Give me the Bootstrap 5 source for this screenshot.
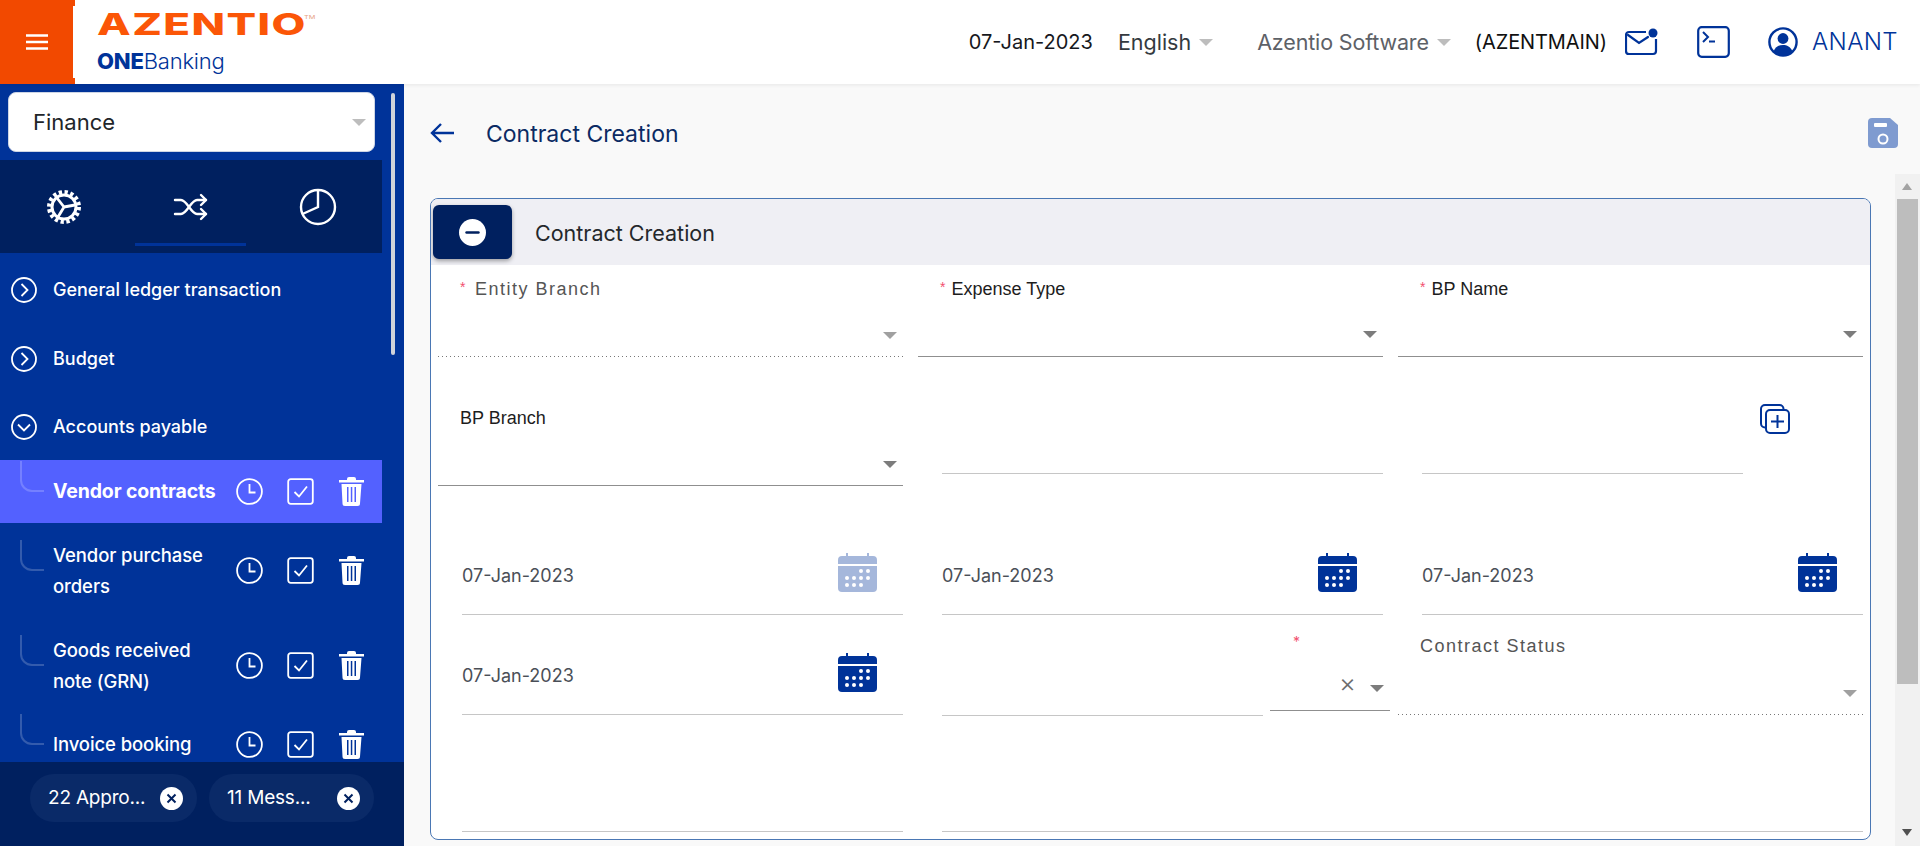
<!DOCTYPE html>
<html lang="en">
<head>
    <meta charset="UTF-8">
    <title>Contract Creation</title>
    <link href="https://cdn.jsdelivr.net/npm/bootstrap@5.3.1/dist/css/bootstrap.min.css" rel="stylesheet">
    <style>
        html, body { height: 100%; overflow: hidden; }
        body { font-family: Inter, "Liberation Sans", sans-serif; background: #f9f9f9; }

        /* top bar */
        .top-bar { height: 84px; background: #fff; padding: 0; box-shadow: 0 1px 4px rgba(0,0,0,.08); position: relative; z-index: 2; flex-wrap: nowrap; }
        .menu-btn { width: 75px; height: 84px; background: #f24900; position: relative; }
        .menu-btn::after { content: ""; position: absolute; left: 73px; top: 6px; width: 2px; height: 72px; background: #fff; }
        .menu-btn svg { margin-right: 2px; }
        .brand-box { margin-left: 22px; width: 260px; }
        .brand-main { color: #fb5607; font-size: 30px; font-weight: 800; line-height: 30px; letter-spacing: 1px; margin-top: 9px; white-space: nowrap; display: inline-block; transform: scaleX(1.46); transform-origin: left center; }
        .brand-main sup { font-size: 5px; font-weight: 400; top: -16px; letter-spacing: 0; color: #e7a283; position: relative; vertical-align: baseline; margin-left: -2px; }
        .brand-sub { color: #003399; font-size: 22px; line-height: 28px; margin-top: 6px; font-weight: 300; letter-spacing: -.2px; }
        .brand-sub b { font-weight: 800; }
        .top-date { font-size: 20px; color: #16181d; margin-right: 25px; white-space: nowrap; }
        .top-lang { font-size: 21.5px; color: #343a40; white-space: nowrap; }
        .top-org { font-size: 21.5px; color: #5d6167; white-space: nowrap; letter-spacing: -.15px; }
        .top-code { font-size: 20px; color: #111; white-space: nowrap; margin-right: 18px; letter-spacing: -.1px; }
        .top-user { color: #003399; font-size: 24px; font-weight: 300; letter-spacing: .4px; margin: 0 22px 0 14px; }
        .tri { width: 0; height: 0; border-left: 7px solid transparent; border-right: 7px solid transparent; border-top: 7px solid #bdbdbd; flex: none; }
        .tri-dark { border-top-color: #7c7c7c; }
        .tri-mid { border-top-color: #a0a0a0; }

        /* sidebar */
        .app-main { height: 762px; }
        .side-bar { width: 404px; background: #003399; position: relative; flex: none; overflow: hidden; color: #fff; }
        .side-thumb { position: absolute; left: 391px; top: 9px; width: 4px; height: 262px; background: #cfd3da; border-radius: 2px; }
        .mod-select { margin: 8px 0 0 8px; width: 367px; height: 60px; background: #fff; border: 1px solid #cdd5e5; border-radius: 8px; color: #212529; font-size: 22px; padding-left: 24px; padding-right: 8px; }
        .mod-tabs { width: 382px; height: 93px; background: #00205f; margin: 8px 0 2px; position: relative; }
        .mod-tab { width: 127px; position: relative; height: 100%; }
        .mod-tab.is-on::after { content: ""; position: absolute; left: 8px; right: 8px; bottom: 7px; height: 3px; background: #003399; }
        .tree-head { height: 69px; font-size: 18px; font-weight: 500; padding-left: 11px; }
        .tree-head svg { margin-right: 16px; flex: none; }
        .tree-row { width: 382px; min-height: 63px; font-size: 18.5px; font-weight: 500; line-height: 31px; letter-spacing: -.1px; padding: 0 18px 0 53px; position: relative; }
        .tree-row::before { content: ""; position: absolute; left: 20px; bottom: 50%; width: 24px; height: 31px; border-left: 2px solid rgba(255,255,255,.2); border-bottom: 2px solid rgba(255,255,255,.2); border-bottom-left-radius: 12px; }
        .tree-row.is-on { background: #5361ff; font-weight: 700; font-size: 19.5px; letter-spacing: -.15px; }
        .tree-tall { min-height: 95px; }
        .tree-name { width: 166px; flex: none; white-space: normal; }
        .is-on .tree-name { white-space: nowrap; }
        .tree-ico { margin-left: auto; gap: 24px; }
        .tree-ico svg:last-child { margin-left: 1px; }
        .side-foot { position: absolute; left: 0; right: 0; bottom: 0; height: 84px; background: #00205f; padding: 12px 30px 0; gap: 12px; }
        .foot-pill { height: 48px; border-radius: 24px; background: #0a2a68; font-size: 19px; letter-spacing: -.2px; padding-left: 18px; white-space: nowrap; }
        .foot-x { width: 23px; height: 23px; border-radius: 50%; background: #fff; margin-left: auto; }

        /* content */
        .page-area { min-width: 0; }
        .page-head { height: 90px; padding: 8px 22px 0 26px; flex: none; }
        .page-title { color: #0b2a63; font-size: 23px; margin-left: 31px; padding-top: 2px; }
        .page-scroll { min-height: 0; }
        .page-pane { padding: 24px 24px 0 26px; min-width: 0; }
        .bar-track { width: 25px; background: #f1f1f1; flex: none; position: relative; }
        .bar-thumb { position: absolute; left: 2px; right: 2px; top: 25px; height: 485px; background: #bdbdbd; }
        .bar-up, .bar-down { position: absolute; left: 7px; width: 0; height: 0; border-left: 5px solid transparent; border-right: 5px solid transparent; }
        .bar-up { top: 9px; border-bottom: 7px solid #a3a3a3; }
        .bar-down { bottom: 10px; border-top: 7px solid #505050; }

        .form-card { height: 642px; border: 1px solid #4a77b4; border-radius: 8px; background: #fff; overflow: hidden; }
        .form-card .card-header { height: 66px; padding: 6px 2px; background: #efeff4; border: 0; border-radius: 0; }
        .fold-btn { width: 79px; height: 54px; background: #00205f; border-radius: 6px; border: 0; box-shadow: 0 2px 4px rgba(0,0,0,.35); padding: 0; }
        .fold-title { font-size: 21.5px; color: #24272b; margin-left: 23px; padding-top: 2px; }
        .form-grid { display: grid; grid-template-columns: repeat(3, 465px); grid-template-rows: 92px 129px 129px 100px 117px; column-gap: 15px; padding: 0 0 0 7px; }
        .fld { height: 100%; border-bottom: 1px solid #8f8f8f; position: relative; }
        .fld-dots { border-bottom: 0; background: linear-gradient(to right, #777 0 1.5px, transparent 1.5px 4px) left bottom / 4px 1px repeat-x; }
        .fld-label { font-family: "Liberation Sans", Arial, sans-serif; font-size: 18px; line-height: 19px; color: #1d1d1d; white-space: nowrap; padding-left: 22px; }
        .fld-label i { color: #f2506e; font-style: normal; font-size: 14px; position: relative; top: -3px; margin-right: 6px; }
        .label-soft { color: #555; letter-spacing: 1.5px; }
        .label-soft i { margin-right: 8px; }
        .pad-a { padding-top: 15px; }
        .pad-b { padding-top: 52px; }
        .pad-c { padding-top: 22px; }
        .fld .tri { position: absolute; right: 6px; bottom: 18px; }
        .fld .low { bottom: 17px; }
        .date-fld { margin-left: 24px; height: 100%; border-bottom: 1px solid #c6c6c6; padding: 0 26px 22px 0; font-size: 18px; line-height: 24px; color: #4a4f57; }
        .date-fld span { margin-bottom: 4px; }
        .cal-off { opacity: .35; }
        .blank-line { margin: 0 0 12px 24px; border-bottom: 1px solid #c6c6c6; height: calc(100% - 12px); flex: 1 1 auto; }
        .short-line { flex: 0 0 321px; }
        .add-btn { margin: 47px 0 0 17px; }
        .wee-line { flex: 0 0 321px; margin: 0 0 -1px 24px; border-bottom: 1px solid #c6c6c6; }
        .wee-select { flex: 0 0 120px; margin: 0 -7px 4px 7px; border-bottom: 1px solid #8f8f8f; position: relative; }
        .wee-star { position: absolute; left: 23px; top: 20px; color: #f2506e; font-size: 14px; line-height: 14px; }
        .wee-x { position: absolute; left: 69px; bottom: 14px; color: #6d6d6d; font-size: 26px; line-height: 26px; font-weight: 300; }
        .wee-select .tri { position: absolute; left: 100px; bottom: 18px; }
        .end-line { margin-left: 24px; height: 100%; border-bottom: 1px solid #c6c6c6; }
    </style>
</head>
<body class="d-flex flex-column">
    <!-- top bar -->
    <nav class="navbar top-bar d-flex align-items-center">
        <div class="menu-btn d-flex align-items-center justify-content-center">
            <svg width="22" height="16" viewBox="0 0 22 16"><path d="M0 1.5h22M0 8h22M0 14.5h22" stroke="#fff" stroke-width="2.4"/></svg>
        </div>
        <div class="brand-box align-self-start">
            <div class="brand-main">AZENTIO<sup>TM</sup></div>
            <div class="brand-sub"><b>ONE</b>Banking</div>
        </div>
        <div class="d-flex align-items-center ms-auto">
            <span class="top-date">07-Jan-2023</span>
            <span class="top-lang">English</span>
            <span class="tri ms-2" style="margin-right:44px"></span>
            <span class="top-org">Azentio Software</span>
            <span class="tri ms-2" style="margin-right:24px"></span>
            <span class="top-code">(AZENTMAIN)</span>
            <svg width="33" height="28" viewBox="0 0 33 28" fill="none" stroke="#003399" stroke-width="2.2" style="margin-right:39px"><path d="M21 4H4a3 3 0 0 0-3 3v16a3 3 0 0 0 3 3h24a3 3 0 0 0 3-3V11"/><path d="M3 7l11 8 9-6" stroke-linecap="round"/><circle cx="28" cy="5" r="4.5" fill="#003399" stroke="none"/></svg>
            <svg width="33" height="32" viewBox="0 0 33 32" fill="none" stroke="#003399" stroke-width="2.2" style="margin-right:38px"><rect x="1.2" y="1.2" width="30.6" height="29.6" rx="3.5"/><path d="M6 6l5 5-5 5M12 15.5h6" stroke-width="2"/></svg>
            <svg width="30" height="30" viewBox="0 0 30 30" fill="none"><circle cx="15" cy="15" r="13.6" stroke="#003399" stroke-width="2.4"/><circle cx="15" cy="11.5" r="5.4" fill="#003399"/><path d="M5.5 24.5c2-5 5.5-6.5 9.5-6.5s7.5 1.5 9.5 6.5a13.5 13.5 0 0 1-19 0z" fill="#003399"/></svg>
            <span class="top-user">ANANT</span>
        </div>
    </nav>

    <div class="app-main d-flex">
        <!-- sidebar -->
        <aside class="side-bar">
            <div class="side-thumb"></div>
            <div class="mod-select d-flex align-items-center justify-content-between">
                <span>Finance</span>
                <span class="tri"></span>
            </div>
            <div class="mod-tabs d-flex">
                <div class="mod-tab d-flex align-items-center justify-content-center">
                    <svg width="36" height="36" viewBox="0 0 36 36" fill="none" stroke="#fff">
                        <circle cx="18" cy="18" r="15" stroke-width="4" stroke-dasharray="3.3 2.6"/>
                        <circle cx="18" cy="18" r="12" stroke-width="3"/>
                        <path d="M18 18L11 9M18 18L29 16M18 18L12 28" stroke-width="2.8"/>
                    </svg>
                </div>
                <div class="mod-tab is-on d-flex align-items-center justify-content-center">
                    <svg width="36" height="28" viewBox="0 0 36 28" fill="none" stroke="#fff" stroke-width="2.4" stroke-linecap="round" stroke-linejoin="round">
                        <path d="M2 7h6c6 0 10 14 16 14h9M2 21h6c6 0 10-14 16-14h9"/>
                        <path d="M28 2l5 5-5 5M28 16l5 5-5 5"/>
                    </svg>
                </div>
                <div class="mod-tab d-flex align-items-center justify-content-center">
                    <svg width="38" height="38" viewBox="0 0 38 38" fill="none" stroke="#fff" stroke-width="2.4">
                        <circle cx="19" cy="19" r="17"/>
                        <path d="M19 2v17L3.500 26"/>
                    </svg>
                </div>
            </div>
            <div class="tree-head d-flex align-items-center">
                <svg width="26" height="26" viewBox="0 0 26 26" fill="none" stroke="#fff" stroke-width="1.8"><circle cx="13" cy="13" r="12"/><path d="M10.5 7l6 6-6 6"/></svg>
                General ledger transaction
            </div>
            <div class="tree-head d-flex align-items-center">
                <svg width="26" height="26" viewBox="0 0 26 26" fill="none" stroke="#fff" stroke-width="1.8"><circle cx="13" cy="13" r="12"/><path d="M10.5 7l6 6-6 6"/></svg>
                Budget
            </div>
            <div class="tree-head d-flex align-items-center" style="height:67px">
                <svg width="26" height="26" viewBox="0 0 26 26" fill="none" stroke="#fff" stroke-width="1.8"><circle cx="13" cy="13" r="12"/><path d="M7 10.5l6 6 6-6"/></svg>
                Accounts payable
            </div>
            <div id="tree-rows"></div>
            <div class="side-foot d-flex">
                <div class="foot-pill d-flex align-items-center" style="width:167px;padding-right:14px">
                    22 Appro...
                    <span class="foot-x d-flex align-items-center justify-content-center"><svg width="11" height="11" viewBox="0 0 11 11"><path d="M1.5 1.5l8 8M9.5 1.5l-8 8" stroke="#00205f" stroke-width="2"/></svg></span>
                </div>
                <div class="foot-pill d-flex align-items-center" style="width:165px;padding-right:14px">
                    11 Mess...
                    <span class="foot-x d-flex align-items-center justify-content-center"><svg width="11" height="11" viewBox="0 0 11 11"><path d="M1.5 1.5l8 8M9.5 1.5l-8 8" stroke="#00205f" stroke-width="2"/></svg></span>
                </div>
            </div>
        </aside>

        <!-- page -->
        <main class="page-area flex-grow-1 d-flex flex-column">
            <div class="page-head d-flex align-items-center">
                <svg width="25" height="22" viewBox="0 0 25 22" fill="none" stroke="#003399" stroke-width="2.4"><path d="M24 11H2M11 2l-9 9 9 9"/></svg>
                <span class="page-title">Contract Creation</span>
                <svg class="ms-auto" width="30" height="30" viewBox="0 0 30 30"><path d="M4 0h18l8 7v19a4 4 0 0 1-4 4H4a4 4 0 0 1-4-4V4a4 4 0 0 1 4-4z" fill="#7f9bd0"/><rect x="6" y="5" width="13" height="4" rx="1" fill="#fff"/><circle cx="15" cy="21" r="4.5" fill="none" stroke="#fff" stroke-width="2"/></svg>
            </div>
            <div class="page-scroll d-flex flex-grow-1">
                <div class="page-pane flex-grow-1">
                    <div class="card form-card">
                        <div class="card-header d-flex align-items-center">
                            <button type="button" class="fold-btn d-flex align-items-center justify-content-center">
                                <svg width="27" height="27" viewBox="0 0 27 27"><circle cx="13.5" cy="13.5" r="13.5" fill="#fff"/><path d="M7.5 13.5h12" stroke="#00205f" stroke-width="2.4" stroke-linecap="round"/></svg>
                            </button>
                            <span class="fold-title">Contract Creation</span>
                        </div>
                        <div class="form-grid">
                            <div class="fld fld-dots pad-a">
                                <div class="fld-label label-soft"><i>*</i>Entity Branch</div>
                                <span class="tri tri-mid"></span>
                            </div>
                            <div class="fld pad-a">
                                <div class="fld-label"><i>*</i>Expense Type</div>
                                <span class="tri tri-dark"></span>
                            </div>
                            <div class="fld pad-a">
                                <div class="fld-label"><i>*</i>BP Name</div>
                                <span class="tri tri-dark"></span>
                            </div>

                            <div class="fld pad-b">
                                <div class="fld-label">BP Branch</div>
                                <span class="tri tri-dark low"></span>
                            </div>
                            <div class="d-flex"><div class="blank-line"></div></div>
                            <div class="d-flex">
                                <div class="blank-line short-line"></div>
                                <svg class="add-btn" width="30" height="30" viewBox="0 0 30 30" fill="none" stroke="#003399" stroke-width="2"><path d="M23.5 6V5a4 4 0 0 0-4-4H5a4 4 0 0 0-4 4v14.5a4 4 0 0 0 4 4h1"/><rect x="6" y="6" width="23" height="23" rx="4" fill="#fff"/><path d="M17.5 11v13M11 17.5h13"/></svg>
                            </div>

                            <div class="date-fld d-flex align-items-end justify-content-between"><span>07-Jan-2023</span><svg class="cal-off" width="39" height="39" viewBox="0 0 39 39"><use href="#cal"/></svg></div>
                            <div class="date-fld d-flex align-items-end justify-content-between"><span>07-Jan-2023</span><svg width="39" height="39" viewBox="0 0 39 39"><use href="#cal"/></svg></div>
                            <div class="date-fld d-flex align-items-end justify-content-between"><span>07-Jan-2023</span><svg width="39" height="39" viewBox="0 0 39 39"><use href="#cal"/></svg></div>

                            <div class="date-fld d-flex align-items-end justify-content-between"><span>07-Jan-2023</span><svg width="39" height="39" viewBox="0 0 39 39"><use href="#cal"/></svg></div>
                            <div class="d-flex">
                                <div class="wee-line"></div>
                                <div class="wee-select">
                                    <span class="wee-star">*</span>
                                    <span class="wee-x">×</span>
                                    <span class="tri tri-dark"></span>
                                </div>
                            </div>
                            <div class="fld fld-dots pad-c">
                                <div class="fld-label label-soft">Contract Status</div>
                                <span class="tri tri-mid"></span>
                            </div>

                            <div class="end-line"></div>
                            <div class="end-line" style="grid-column: span 2"></div>
                        </div>
                    </div>
                </div>
                <div class="bar-track">
                    <span class="bar-up"></span>
                    <span class="bar-thumb"></span>
                    <span class="bar-down"></span>
                </div>
            </div>
        </main>
    </div>

    <svg width="0" height="0" class="position-absolute">
        <symbol id="cal" viewBox="0 0 39 39">
            <path d="M8 0h2v3h19V0h2v3h4a4 4 0 0 1 4 4v4H0V7a4 4 0 0 1 4-4h4z" fill="#003399"/>
            <path d="M0 13h39v22a4 4 0 0 1-4 4H4a4 4 0 0 1-4-4z" fill="#003399"/>
            <g fill="#fff">
                <circle cx="23" cy="18" r="2"/><circle cx="30" cy="18" r="2"/>
                <circle cx="9" cy="25" r="2"/><circle cx="16" cy="25" r="2"/><circle cx="23" cy="25" r="2"/><circle cx="30" cy="25" r="2"/>
                <circle cx="9" cy="32" r="2"/><circle cx="16" cy="32" r="2"/><circle cx="23" cy="32" r="2"/>
            </g>
        </symbol>
    </svg>

    <script>
        const treeItems = [
            { name: "Vendor contracts", active: true },
            { name: "Vendor purchase orders", tall: true },
            { name: "Goods received note (GRN)", tall: true },
            { name: "Invoice booking" }
        ];
        const rowIcons = `
            <svg width="27" height="27" viewBox="0 0 27 27" fill="none" stroke="#fff" stroke-width="1.8"><circle cx="13.5" cy="13.5" r="12.4"/><path d="M13.5 6v8.500h6"/></svg>
            <svg width="27" height="27" viewBox="0 0 27 27" fill="none" stroke="#fff" stroke-width="1.8"><rect x="1.2" y="1.2" width="24.6" height="24.6" rx="2.5"/><path d="M7.5 14l4.500 4.500 8-10"/></svg>
            <svg width="25" height="29" viewBox="0 0 25 29"><path d="M8 3V2a2 2 0 0 1 2-2h5a2 2 0 0 1 2 2v1h8v2.500H0V3z" fill="#fff"/><path fill-rule="evenodd" d="M2.500 7h20l-1.500 19.500a2.500 2.500 0 0 1-2.500 2.500h-12.500a2.500 2.500 0 0 1-2.500-2.500zM8 10v15h1.500V10zM11.800 10v15h1.500V10zM15.500 10v15H17V10z" fill="#fff"/></svg>`;
        const treeRows = document.getElementById("tree-rows");
        treeItems.forEach((item) => {
            const row = document.createElement("div");
            row.className = "tree-row d-flex align-items-center";
            if (item.active) row.classList.add("is-on");
            if (item.tall) row.classList.add("tree-tall");
            row.innerHTML = `<span class="tree-name">${item.name}</span><span class="tree-ico d-flex align-items-center">${rowIcons}</span>`;
            treeRows.appendChild(row);
        });
    </script>
    <script src="https://cdn.jsdelivr.net/npm/bootstrap@5.3.1/dist/js/bootstrap.bundle.min.js"></script>
</body>
</html>
